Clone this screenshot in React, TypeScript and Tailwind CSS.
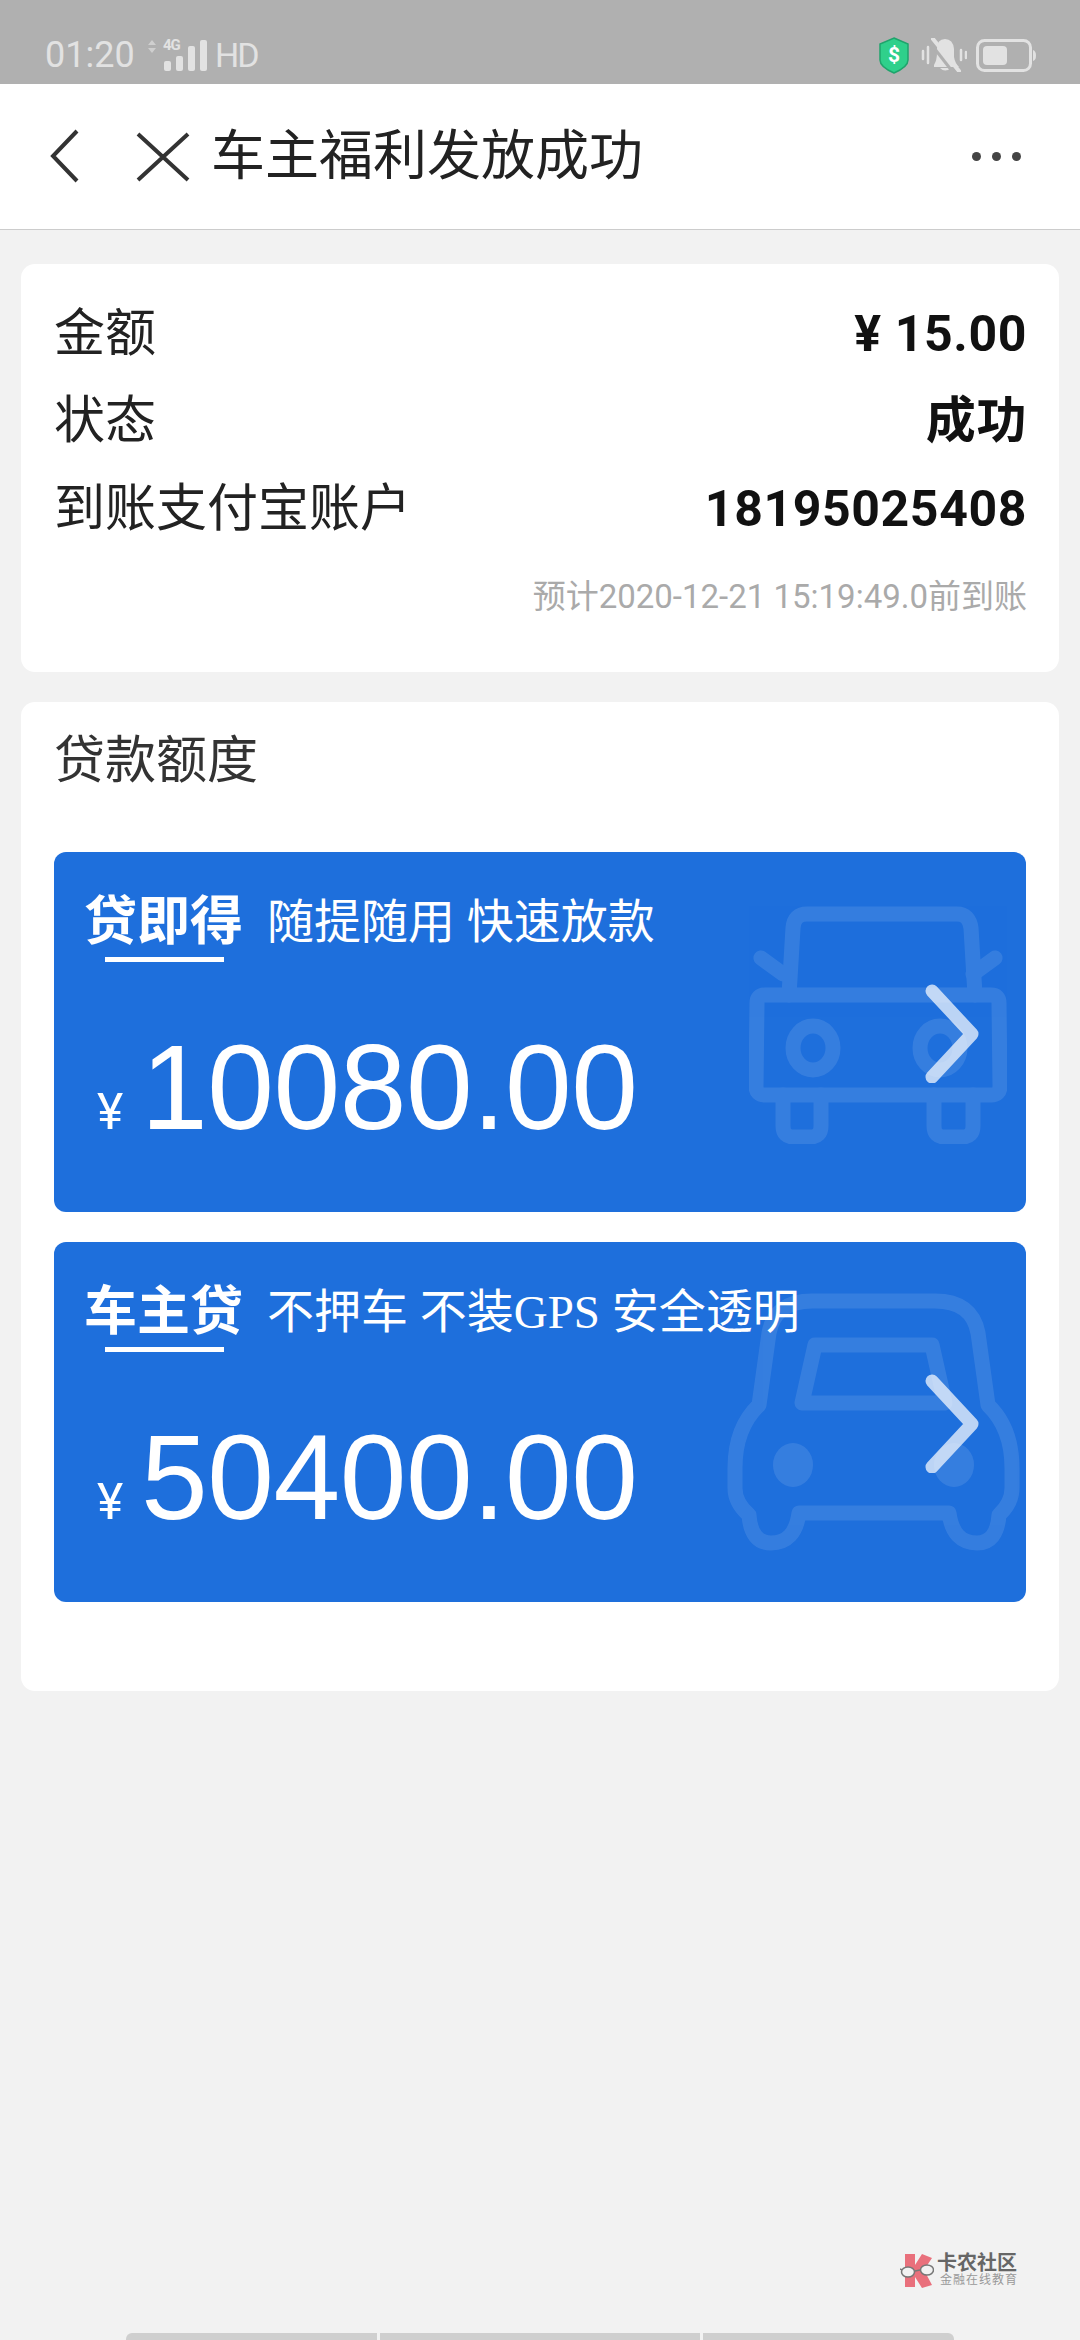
const PILLS = ['w-[251px]', 'w-[320px]', 'w-[251px]']

function StatusBar() {
  return (
    <div className="h-[84px] bg-[#b0b0b0] flex items-center justify-between pl-[45px] pr-[44px] pt-[26px] text-[#e2e2e2]">
      <div className="flex items-center">
        <span className="text-[36px] leading-[36px] w-[103px]">01:20</span>
        <div className="relative w-[60px] h-[32px]">
          <svg width="60" height="32" viewBox="0 0 60 32" className="block">
            <path d="M0 6 L4 1 L8 6 Z M0 9 L8 9 L4 14 Z" fill="#cfcfcf" />
            <rect x="16" y="22" width="7" height="10" rx="2" fill="#e2e2e2" />
            <rect x="28" y="17" width="7" height="15" rx="2" fill="#e2e2e2" />
            <rect x="40" y="7" width="7" height="25" rx="2" fill="#e2e2e2" />
            <rect x="52" y="1" width="7" height="31" rx="2" fill="#e2e2e2" />
          </svg>
          <span className="absolute left-[15px] top-[-1px] text-[15px] leading-[15px] font-bold tracking-[-1px]">4G</span>
        </div>
        <span className="ml-[7px] text-[34px] leading-[33px] tracking-[-2px]">HD</span>
      </div>
      <div className="flex items-center">
        <svg width="30" height="37" viewBox="0 0 30 37" className="block">
          <path d="M15 1 L29 7 V23 Q29 30 15 36 Q1 30 1 23 V7 Z" fill="#2fd08b" stroke="#1fa46c" strokeWidth="1.5" />
          <text x="15" y="25" textAnchor="middle" fontSize="21" fontWeight="700" fill="#ffffff">$</text>
        </svg>
        <svg width="46" height="34" viewBox="0 0 46 34" className="block ml-[12px]">
          <path d="M13 27 Q16 22 16 15 V11 Q16 1 24 1 Q32 1 33 11 V19 Q34 25 38 29 H13 Z M19 30 Q24 35 30 30 Z" fill="#e2e2e2" />
          <path d="M10 6 L31 33" stroke="#b0b0b0" strokeWidth="3" />
          <path d="M12 1 L38 33" stroke="#e2e2e2" strokeWidth="4" strokeLinecap="round" />
          <path d="M2 13 V21 M7 9 V25 M40 12 V22 M45 14 V20" stroke="#e2e2e2" strokeWidth="2.5" strokeLinecap="round" />
        </svg>
        <svg width="60" height="33" viewBox="0 0 60 33" className="block ml-[9px]">
          <rect x="1.5" y="1.5" width="53" height="30" rx="7" fill="none" stroke="#e2e2e2" strokeWidth="3" />
          <rect x="7" y="7" width="24" height="19" rx="4" fill="#e2e2e2" />
          <path d="M57 11 Q60 12 60 16.5 Q60 21 57 22 Z" fill="#e2e2e2" />
        </svg>
      </div>
    </div>
  )
}

function Header() {
  return (
    <div className="h-[146px] bg-white border-b border-[#cccccc] flex items-center pl-[48px] pr-[59px]">
      <svg width="34" height="54" viewBox="0 0 34 54" className="block shrink-0 mt-[-1px]">
        <path d="M29 2 L5 27 L29 52" fill="none" stroke="#333333" strokeWidth="4" />
      </svg>
      <svg width="54" height="50" viewBox="0 0 54 50" className="block shrink-0 ml-[54px]">
        <path d="M2 2 L52 48 M52 2 L2 48" fill="none" stroke="#333333" strokeWidth="4" />
      </svg>
      <span className="ml-[21px] text-[54px] leading-[54px] text-[#222222]">车主福利发放成功</span>
      <div className="ml-auto flex gap-[11px]">
        <div className="w-[9px] h-[9px] rounded-full bg-[#444444]" />
        <div className="w-[9px] h-[9px] rounded-full bg-[#444444]" />
        <div className="w-[9px] h-[9px] rounded-full bg-[#444444]" />
      </div>
    </div>
  )
}

function InfoRow({ label, value }: { label: string; value: string }) {
  return (
    <div className="h-[87.5px] flex items-center justify-between">
      <span className="text-[51px] leading-[60px] text-[#222222]">{label}</span>
      <span className="text-[50px] leading-[60px] font-bold text-[#111111] tracking-[0.6px]">{value}</span>
    </div>
  )
}

function Chevron() {
  return (
    <svg width="56" height="100" viewBox="0 0 56 100" className="absolute left-[870px] top-[131px]">
      <path d="M8 8 L48 51 L8 94" fill="none" stroke="#ffffff" strokeOpacity="0.7" strokeWidth="13" strokeLinecap="round" strokeLinejoin="round" />
    </svg>
  )
}

function CarFront() {
  return (
    <svg width="258" height="238" viewBox="0 0 258 238" className="absolute left-[695px] top-[54px]">
      <g fill="none" stroke="#ffffff" strokeWidth="15" strokeLinecap="round" opacity="0.1">
        <path d="M16 89 H242 Q250 89 250 97 L251 180 Q251 189 242 189 H16 Q7 189 7 180 L8 97 Q8 89 16 89 Z" />
        <path d="M40 89 L44 22 Q45 8 58 8 H208 Q220 8 222 22 L226 89" />
        <path d="M12 52 L34 68 M246 52 L224 68" />
        <path d="M34 189 V220 Q34 231 45 231 H61 Q72 231 72 220 V189 M185 189 V220 Q185 231 196 231 H213 Q224 231 224 220 V189" />
        <ellipse cx="64" cy="142" rx="20" ry="22" />
        <ellipse cx="191" cy="142" rx="20" ry="22" />
      </g>
    </svg>
  )
}

function CarRound() {
  return (
    <svg width="294" height="258" viewBox="0 0 294 258" className="absolute left-[673px] top-[51px]">
      <g fill="none" stroke="#ffffff" strokeWidth="15" strokeLinejoin="round" opacity="0.1">
        <path d="M8 175 Q8 135 32 112 L42 40 Q48 8 85 8 H208 Q245 8 251 40 L261 112 Q285 135 285 175 V195 Q285 210 272 222 Q270 250 250 250 Q226 250 222 220 H72 Q68 250 44 250 Q24 250 22 222 Q8 210 8 195 Z" />
        <path d="M88 52 H205 L218 110 H75 Z" />
        <ellipse cx="66" cy="172" rx="20" ry="22" fill="#ffffff" stroke="none" />
        <ellipse cx="227" cy="172" rx="20" ry="22" fill="#ffffff" stroke="none" />
      </g>
    </svg>
  )
}

function LoanCard({ name, slogan, amount, car }: { name: string; slogan: string; amount: string; car: React.ReactNode }) {
  return (
    <div className="relative h-[360px] rounded-[12px] bg-[#1e6fdc] overflow-hidden pl-[30px] pt-[38px] text-white">
      {car}
      <div className="relative flex items-center h-[60px] pt-[3px]">
        <span className="text-[53px] leading-[60px] font-bold">{name}</span>
        <span className="ml-[24px] text-[47px] leading-[60px] font-['Liberation_Serif','Noto_Sans_CJK_SC',serif] whitespace-pre">{slogan}</span>
      </div>
      <div className="relative ml-[21px] mt-[7px] w-[119px] h-[5px] bg-white" />
      <div className="relative flex items-baseline mt-[65px] pl-[13px]">
        <span className="text-[50px] leading-[120px] w-[44px]">¥</span>
        <span className="text-[120px] leading-[120px] font-['Liberation_Sans',sans-serif] tracking-[-0.5px]">{amount}</span>
      </div>
      <Chevron />
    </div>
  )
}

function Watermark() {
  return (
    <div className="absolute left-[900px] top-[2253px] flex items-start">
      <svg width="34" height="36" viewBox="0 0 34 36" className="block shrink-0">
        <path d="M5 1 H15 V12 L22 1 L32 5 L24 17 L32 32 L22 35 L15 24 V34 H5 Z" fill="#e9707c" />
        <ellipse cx="8" cy="19" rx="6.5" ry="5" fill="#f2f2f2" stroke="#777777" strokeWidth="1.5" />
        <ellipse cx="27" cy="17" rx="6.5" ry="5" fill="#f2f2f2" stroke="#777777" strokeWidth="1.5" />
        <path d="M15 18 L20 17 M2 17 L0 16" stroke="#777777" strokeWidth="1.5" />
      </svg>
      <div className="ml-[3px] flex flex-col">
        <span className="text-[20px] leading-[20px] font-bold text-[#666666] whitespace-nowrap">卡农社区</span>
        <span className="mt-[1px] ml-[3px] text-[12px] leading-[13px] tracking-[1px] text-[#999999] whitespace-nowrap">金融在线教育</span>
      </div>
    </div>
  )
}

export default function App() {
  return (
    <div className="relative w-[1080px] h-[2340px] bg-[#f2f2f2] flex flex-col overflow-hidden font-['Roboto','Noto_Sans_CJK_SC',sans-serif]">
      <StatusBar />
      <Header />

      <div className="mt-[34px] mx-[21px] h-[408px] rounded-[14px] bg-white pl-[33px] pr-[32px] pt-[26px]">
        <InfoRow label="金额" value="¥ 15.00" />
        <InfoRow label="状态" value="成功" />
        <InfoRow label="到账支付宝账户" value="18195025408" />
        <div className="mt-[22px] text-right text-[33px] leading-[44px] text-[#aaaaaa]">预计2020-12-21 15:19:49.0前到账</div>
      </div>

      <div className="mt-[30px] mx-[21px] h-[989px] rounded-[14px] bg-white px-[33px] pt-[29px]">
        <div className="text-[51px] leading-[60px] text-[#333333]">贷款额度</div>
        <div className="mt-[61px] flex flex-col gap-[30px]">
          <LoanCard name="贷即得" slogan="随提随用 快速放款" amount="10080.00" car={<CarFront />} />
          <LoanCard name="车主贷" slogan="不押车 不装GPS 安全透明" amount="50400.00" car={<CarRound />} />
        </div>
      </div>

      <Watermark />

      <div className="mt-auto ml-[126px] flex gap-[3px]">
        {PILLS.map((w, i) => (
          <div key={i} className={`${w} h-[7px] bg-[#cfcfcf] ${i === 0 ? 'rounded-tl-[6px]' : ''} ${i === 2 ? 'rounded-tr-[6px]' : ''}`} />
        ))}
      </div>
    </div>
  )
}
